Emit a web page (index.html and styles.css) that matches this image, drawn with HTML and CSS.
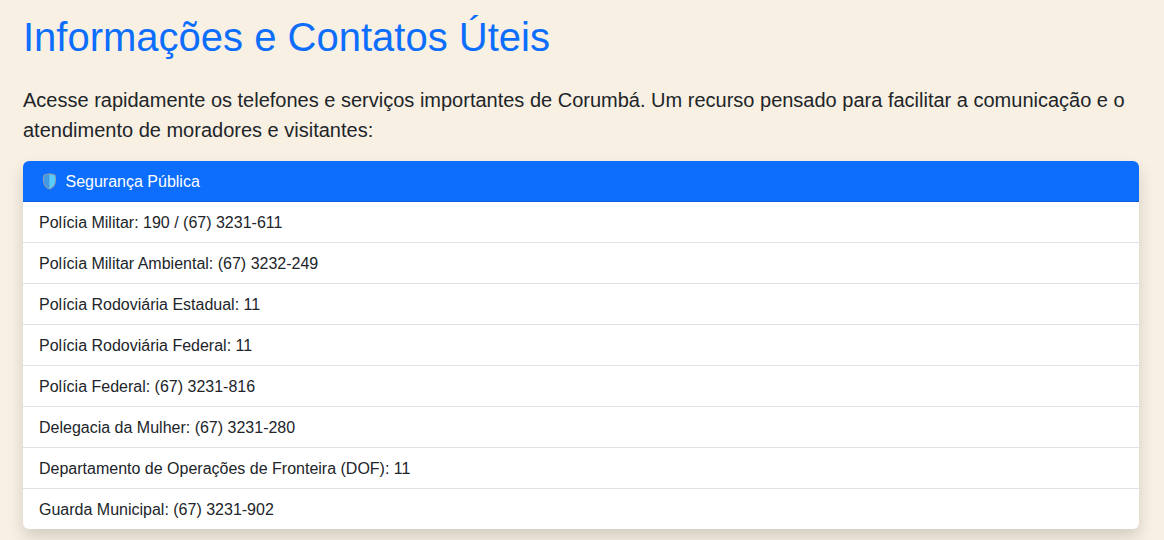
FILE: index.html
```html
<!DOCTYPE html>
<html lang="pt-BR">
<head>
<meta charset="utf-8">
<title>Informações e Contatos Úteis</title>
<link rel="stylesheet" href="styles.css">
</head>
<body>
<main class="container">
  <h1 class="title">Informações e Contatos Úteis</h1>
  <p class="lead">Acesse rapidamente os telefones e serviços importantes de Corumbá. Um recurso pensado para facilitar a comunicação e o atendimento de moradores e visitantes:</p>
  <section class="card">
    <header class="card-header">
      <svg class="shield" viewBox="0 0 14 17" aria-hidden="true">
        <path d="M7 .3C5 .3 3.600 1.200 1.200 1.600.1 4.700.1 8.700 1.300 11.500c1 2.400 3 4.200 5.700 5 2.700-.8 4.700-2.600 5.700-5 1.200-2.800 1.200-6.800.1-9.900C10.400 1.200 9 .3 7 .3z" fill="#8f9bad"/>
        <path d="M7 1.300C5.200 1.300 4.100 2.100 2 2.500c-.8 2.600-.8 6 .2 8.500.9 2.200 2.500 3.800 4.800 4.500z" fill="#409be5"/>
        <path d="M7 1.300c1.800 0 2.900.8 5 1.200.8 2.600.8 6-.2 8.500-.9 2.200-2.500 3.800-4.800 4.500z" fill="#58ccfd"/>
      </svg>
      <span>Segurança Pública</span>
    </header>
    <ul class="list">
      <li>Polícia Militar: 190 / (67) 3231-611</li>
      <li>Polícia Militar Ambiental: (67) 3232-249</li>
      <li>Polícia Rodoviária Estadual: 11</li>
      <li>Polícia Rodoviária Federal: 11</li>
      <li>Polícia Federal: (67) 3231-816</li>
      <li>Delegacia da Mulher: (67) 3231-280</li>
      <li>Departamento de Operações de Fronteira (DOF): 11</li>
      <li>Guarda Municipal: (67) 3231-902</li>
    </ul>
  </section>
</main>
</body>
</html>
```
FILE: styles.css
```css
* { box-sizing: border-box; }
body {
  margin: 0;
  height: 540px;
  overflow: hidden;
  background: #f8f0e3;
  color: #212529;
  font: 16px/24px "Liberation Sans", Arial, sans-serif;
}
.container { padding: 13px 25px 0 23px; }
.title {
  margin: 0 0 24px;
  color: #0d6efd;
  font-size: 40px;
  font-weight: 400;
  line-height: 48px;
}
.lead { margin: 0 0 16px; font-size: 20px; line-height: 30px; }
.card {
  overflow: hidden;
  border-radius: 6px;
  background: #fff;
  box-shadow: 0 8px 16px rgba(0, 0, 0, .15);
}
.card-header {
  display: flex;
  align-items: center;
  gap: 8.5px;
  height: 41px;
  padding: 1px 20px 0 19px;
  border-bottom: 1px solid #0b5ed7;
  background: #0d6efd;
  color: #fff;
}
.shield { width: 15px; height: 17px; }
.card-header span { padding-top: 1px; }
.list { margin: 0; padding: 0; list-style: none; }
.list li { padding: 9px 16px 7px; border-bottom: 1px solid #dee2e6; }
.list li:last-child { border-bottom: 0; }
```
